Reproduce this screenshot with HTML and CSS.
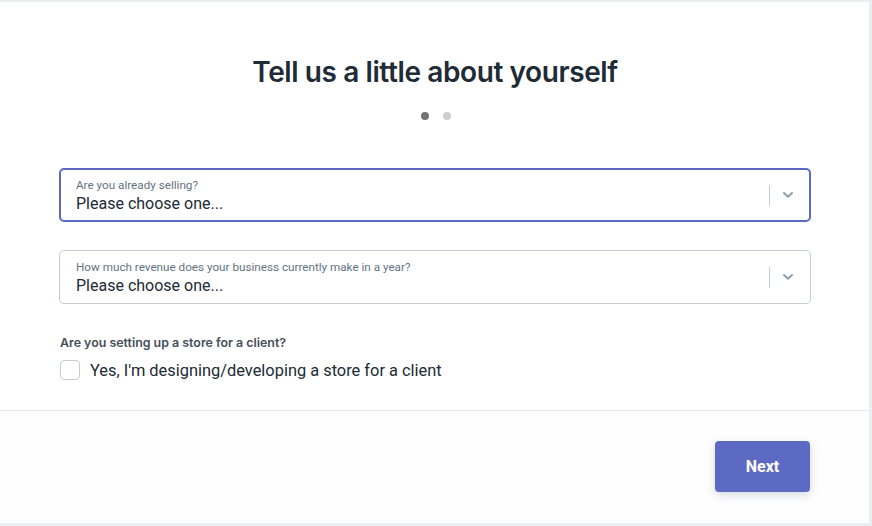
FILE: index.html
```html
<!DOCTYPE html>
<html>
<head>
<meta charset="utf-8">
<link rel="stylesheet" href="styles.css">
</head>
<body>
<div class="card">
  <div class="main">
    <h1 class="title">Tell us a little about yourself</h1>
    <div class="dots"><span class="dot active"></span><span class="dot"></span></div>
    <div class="select focused">
      <div class="select-text">
        <div class="select-label">Are you already selling?</div>
        <div class="select-value">Please choose one...</div>
      </div>
      <div class="select-divider"></div>
      <svg class="chevron" width="12" height="8" viewBox="0 0 12 8"><path d="M2 2 L6 5.8 L10 2" fill="none" stroke="#919eab" stroke-width="2" stroke-linecap="round" stroke-linejoin="round"/></svg>
    </div>
    <div class="select">
      <div class="select-text">
        <div class="select-label">How much revenue does your business currently make in a year?</div>
        <div class="select-value">Please choose one...</div>
      </div>
      <div class="select-divider"></div>
      <svg class="chevron" width="12" height="8" viewBox="0 0 12 8"><path d="M2 2 L6 5.8 L10 2" fill="none" stroke="#919eab" stroke-width="2" stroke-linecap="round" stroke-linejoin="round"/></svg>
    </div>
    <div class="question">Are you setting up a store for a client?</div>
    <label class="check-row"><span class="checkbox"></span><span class="check-text">Yes, I'm designing/developing a store for a client</span></label>
  </div>
  <div class="footer">
    <button class="next">Next</button>
  </div>
</div>
</body>
</html>
```
FILE: styles.css
```css
html, body { margin: 0; padding: 0; }
body {
  background: #ebeef0;
  width: 872px;
  height: 526px;
  overflow: hidden;
  font-family: Roboto, "Liberation Sans", sans-serif;
}
.card {
  width: 869px;
  height: 521px;
  margin-top: 2px;
  background: #ffffff;
  display: flex;
  flex-direction: column;
}
.main {
  padding: 0 58px 0 59px;
  height: 408px;
  display: flex;
  flex-direction: column;
}
.title {
  margin: 53px 0 0;
  text-align: center;
  font-family: Inter, "Liberation Sans", sans-serif;
  font-weight: 600;
  font-size: 28px;
  letter-spacing: -0.4px;
  line-height: 34px;
  color: #212b36;
}
.dots {
  display: flex;
  justify-content: center;
  gap: 14px;
  margin-top: 23px;
  padding-left: 1px;
}
.dot {
  width: 8px;
  height: 8px;
  border-radius: 50%;
  background: #cdcdcd;
}
.dot.active { background: #737373; }
.select {
  margin-top: 48px;
  height: 52px;
  border: 1px solid #c4cdd5;
  border-radius: 5px;
  display: flex;
  align-items: center;
  padding: 0 16px 0 16px;
}
.select.focused {
  border: 2px solid #5c6ac4;
  height: 50px;
  padding: 0 15px 0 15px;
}
.select + .select { margin-top: 28px; }
.select-text { flex: 1; padding-top: 2px; }
.select-label {
  font-size: 11.7px;
  line-height: 13px;
  color: #637381;
}
.select-value {
  font-size: 16px;
  line-height: 20px;
  color: #212b36;
  margin-top: 2px;
}
.select-divider {
  width: 1px;
  height: 21px;
  background: #c4cdd5;
  margin-right: 12px;
}
.chevron { display: block; }
.question {
  margin-top: 31px;
  margin-left: 1px;
  font-family: Inter, "Liberation Sans", sans-serif;
  font-weight: 600;
  font-size: 12.4px;
  color: #454f5b;
}
.check-row {
  display: flex;
  align-items: center;
  margin-top: 10px;
  margin-left: 1px;
}
.checkbox {
  width: 18px;
  height: 18px;
  border: 1px solid #c4cdd5;
  border-radius: 4px;
  background: #fff;
  margin-right: 10px;
}
.check-text {
  font-size: 16.4px;
  color: #212b36;
}
.footer {
  flex: 1;
  border-top: 1px solid #e6e8eb;
  background: #fefefe;
  display: flex;
  justify-content: flex-end;
  align-items: flex-start;
  padding: 30px 59px 0 0;
}
.next {
  width: 95px;
  height: 51px;
  border: none;
  border-radius: 4px;
  background: #5c6ac4;
  color: #fff;
  font-family: Roboto, "Liberation Sans", sans-serif;
  font-weight: 700;
  font-size: 16px;
  box-shadow: 0 3px 10px rgba(40, 50, 90, 0.18);
}
```
